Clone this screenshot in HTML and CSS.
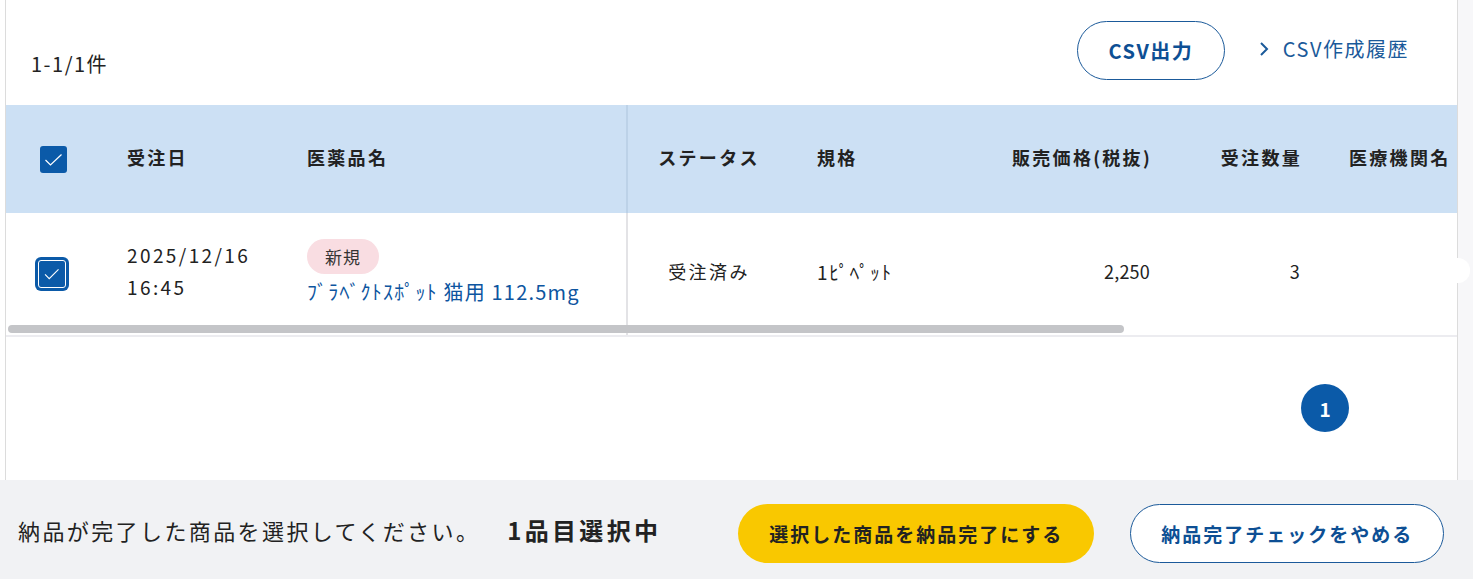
FILE: index.html
```html
<!DOCTYPE html>
<html lang="ja">
<head>
<meta charset="utf-8">
<title>受注一覧</title>
<link rel="stylesheet" href="styles.css">
</head>
<body>
<div class="page">
  <div class="gutter"></div>
  <main class="panel">
    <div class="toolbar">
      <div class="count">1-1/1件</div>
      <div class="actions">
        <button class="btn-outline csv">CSV出力</button>
        <a class="history" href="#"><svg class="chev" width="12" height="16" viewBox="0 0 12 16"><path d="M3 2 L9 8 L3 14" fill="none" stroke="#1b5a9a" stroke-width="2"/></svg>CSV作成履歴</a>
      </div>
    </div>
    <div class="table-wrap">
      <div class="grid head">
        <div class="cell cb-cell"><span class="cb cb-head"><svg width="27" height="27" viewBox="0 0 27 27"><path d="M5.5 14 L10.5 19 L21.5 8.5" fill="none" stroke="#fff" stroke-width="1.2"/></svg></span></div>
        <div class="cell">受注日</div>
        <div class="cell name-col">医薬品名</div>
        <div class="cell center">ステータス</div>
        <div class="cell">規格</div>
        <div class="cell right">販売価格(税抜)</div>
        <div class="cell right">受注数量</div>
        <div class="cell inst">医療機関名</div>
      </div>
      <div class="grid row">
        <div class="cell cb-cell"><span class="cb cb-row"><svg width="28" height="28" viewBox="0 0 28 28"><path d="M6.5 14.5 L11 19 L21 9" fill="none" stroke="#fff" stroke-width="1.2"/></svg></span></div>
        <div class="cell date">2025/12/16<br>16:45</div>
        <div class="cell name-col prod">
          <span class="badge">新規</span>
          <span class="prod-name">ﾌﾞﾗﾍﾞｸﾄｽﾎﾟｯﾄ 猫用 112.5mg</span>
        </div>
        <div class="cell center status">受注済み</div>
        <div class="cell spec">1ﾋﾟﾍﾟｯﾄ</div>
        <div class="cell right num">2,250</div>
        <div class="cell right num">3</div>
        <div class="cell inst"></div>
      </div>
      <div class="scroll-thumb"></div>
    </div>
    <div class="pager">
      <span class="page-num">1</span>
    </div>
  </main>
  <div class="side"></div>
  <div class="blob"></div>
</div>
<footer class="footer">
  <p class="msg">納品が完了した商品を選択してください。</p>
  <p class="sel">1品目選択中</p>
  <button class="btn-yellow">選択した商品を納品完了にする</button>
  <button class="btn-outline cancel">納品完了チェックをやめる</button>
</footer>
</body>
</html>
```
FILE: styles.css
```css
* { box-sizing: border-box; }
html, body { margin: 0; padding: 0; }
body {
  font-family: "Noto Sans CJK JP", "Noto Sans", sans-serif;
  color: #222;
  background: #fff;
  width: 1473px;
  height: 579px;
  overflow: hidden;
}
.page {
  position: relative;
  display: flex;
  height: 480px;
}
.gutter { width: 5px; background: #fff; }
.panel {
  width: 1453px;
  border-left: 1px solid #dcdcdc;
  border-right: 1px solid #dcdcdc;
  background: #fff;
  display: flex;
  flex-direction: column;
}
.side { flex: 1; background: #f7f7f9; }
.blob {
  position: absolute;
  left: 1420px;
  top: 258px;
  width: 50px;
  height: 25px;
  border-radius: 12px;
  background: #fff;
}

.toolbar {
  display: flex;
  justify-content: space-between;
  align-items: flex-end;
  height: 105px;
  padding: 21px 48px 25px 25px;
}
.count {
  font-size: 20px;
  line-height: 26px;
  padding-bottom: 3px;
  letter-spacing: 1.5px;
}
.actions {
  display: flex;
  align-items: center;
  gap: 33px;
}
.btn-outline {
  font-family: inherit;
  background: #fff;
  border: 1px solid #1b5a9a;
  border-radius: 30px;
  color: #0d4f94;
  font-weight: 700;
  font-size: 20px;
  letter-spacing: 1.5px;
  cursor: pointer;
}
.csv {
  width: 148px;
  height: 59px;
}
.history {
  display: flex;
  align-items: center;
  gap: 13px;
  color: #1b5a9a;
  text-decoration: none;
  font-size: 20px;
  letter-spacing: 1.5px;
  margin-bottom: 4px;
}

.table-wrap {
  position: relative;
  overflow: hidden;
  border-bottom: 2px solid #ececf0;
}
.grid {
  display: grid;
  grid-template-columns: 94px 180px 348px 162px 190px 196px 150px 200px;
  width: 1520px;
}
.cell {
  display: flex;
  align-items: center;
  padding-left: 27px;
  font-size: 18px;
}
.head {
  height: 108px;
  background: #cce0f4;
}
.head .cell {
  font-weight: 700;
  letter-spacing: 2.3px;
  padding-bottom: 5px;
}
.head .cell.cb-cell { padding-bottom: 0; }
.row { height: 122px; }
.row .cell { padding-bottom: 6px; }
.row .cell.cb-cell { padding-bottom: 0; }
.name-col { border-right: 2px solid #e3e3e6; }
.head .name-col { border-right-color: #bcd2e8; }
.center { justify-content: center; padding-left: 0; }
.right { justify-content: flex-end; padding-left: 0; padding-right: 26px; }
.head .right { padding-right: 24px; }
.inst { padding-left: 23px; }
.cb-cell { justify-content: center; padding-left: 0; }
.cb {
  display: inline-flex;
  background: #0b5aa8;
}
.cb-head {
  width: 27px;
  height: 27px;
  border-radius: 3px;
}
.cb-row {
  width: 34px;
  height: 34px;
  border-radius: 6px;
  padding: 3px;
  margin-right: 2px;
}
.cb-row svg {
  border: 1px solid #fff;
  border-radius: 3px;
}
.date {
  font-size: 19px;
  line-height: 32px;
  letter-spacing: 2.4px;
}
.prod {
  flex-direction: column;
  align-items: flex-start;
  justify-content: center;
  gap: 6px;
}
.badge {
  display: inline-block;
  background: #f9dde2;
  border-radius: 18px;
  font-size: 17px;
  letter-spacing: 1px;
  line-height: 35px;
  padding: 0 18px 0 18px;
  color: #333;
}
.prod-name {
  color: #0d55a0;
  font-size: 20px;
  letter-spacing: 1.2px;
  line-height: 24px;
}
.status { letter-spacing: 2.4px; }
.spec { font-size: 19px; letter-spacing: 1.6px; }
.num { letter-spacing: 0.2px; }
.scroll-thumb {
  position: absolute;
  left: 2px;
  bottom: 2px;
  width: 1116px;
  height: 8px;
  border-radius: 4px;
  background: #c4c5c8;
}

.pager {
  flex: 1;
  display: flex;
  justify-content: flex-end;
  align-items: flex-start;
  padding: 47px 108px 0 0;
}
.page-num {
  width: 48px;
  height: 48px;
  border-radius: 50%;
  background: #0b5aa8;
  color: #fff;
  font-weight: 700;
  font-size: 19px;
  display: flex;
  align-items: center;
  justify-content: center;
}

.footer {
  height: 99px;
  background: #f1f2f4;
  display: flex;
  align-items: center;
  padding: 0 0 0 18px;
}
.footer p { margin: 0; }
.msg {
  font-size: 22px;
  letter-spacing: 2.4px;
}
.sel {
  font-size: 24px;
  font-weight: 700;
  letter-spacing: 3.3px;
  margin-left: 27px !important;
}
.btn-yellow {
  font-family: inherit;
  margin-left: 77px;
  margin-top: 8px;
  width: 356px;
  height: 59px;
  border: none;
  border-radius: 30px;
  background: #f9c800;
  color: #222;
  font-weight: 700;
  font-size: 19px;
  letter-spacing: 2px;
}
.cancel {
  margin-left: 36px;
  margin-top: 8px;
  width: 314px;
  height: 59px;
  font-size: 19px;
  letter-spacing: 2px;
}
```
